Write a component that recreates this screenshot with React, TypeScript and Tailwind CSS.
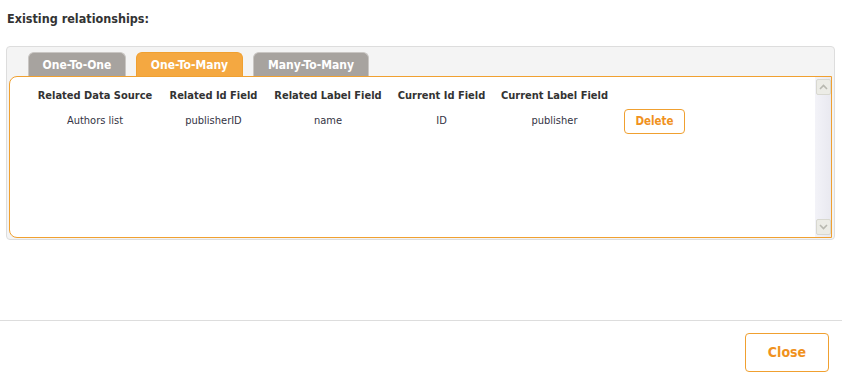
import React from 'react';

const columns = [
  { label: 'Related Data Source', width: 'w-[132px]' },
  { label: 'Related Id Field', width: 'w-[105px]' },
  { label: 'Related Label Field', width: 'w-[124px]' },
  { label: 'Current Id Field', width: 'w-[103px]' },
  { label: 'Current Label Field', width: 'w-[123px]' },
];

const rows = [['Authors list', 'publisherID', 'name', 'ID', 'publisher']];

const tabs = ['One-To-One', 'One-To-Many', 'Many-To-Many'];

export default function App() {
  return (
    <div
      className="w-[842px] h-[379px] bg-white text-[#333] flex flex-col"
      style={{ fontFamily: '"DejaVu Sans Condensed", "DejaVu Sans", sans-serif' }}
    >
      {/* Title */}
      <div className="pt-[11px] pl-[7px] text-[12.5px] font-bold leading-[15px] text-[#333]">
        Existing relationships:
      </div>

      {/* Tab container */}
      <div className="mt-[20px] ml-[6px] w-[829px] border border-[#dddddd] rounded-[4px] bg-[#f4f4f4] pt-[5px] px-[2px] pb-[1px]">
        <div className="flex gap-[10px] pl-[19px] h-[24px]">
          {tabs.map((t, i) => (
            <div
              key={t}
              className={
                'flex items-center justify-center rounded-t-[6px] text-[12px] font-bold text-white border border-b-0 ' +
                (i === 1
                  ? 'bg-[#f4a841] border-[#f0a030] w-[107px]'
                  : 'bg-[#a7a39f] border-[#c9c6c3] ' + (i === 0 ? 'w-[98px]' : 'w-[116px]'))
              }
            >
              {t}
            </div>
          ))}
        </div>

        {/* Panel */}
        <div className="h-[162px] border border-[#f0a030] rounded-l-[8px] bg-white flex">
          <div className="flex-1 pl-[19px] pt-[10px]">
            <table className="border-collapse text-[11px]">
              <thead>
                <tr>
                  {columns.map((c) => (
                    <th key={c.label} className={c.width + ' text-center font-bold h-[18px] p-0 text-[#333]'}>
                      {c.label}
                    </th>
                  ))}
                  <th className="w-[77px] p-0" />
                </tr>
              </thead>
              <tbody>
                {rows.map((r) => (
                  <tr key={r[0]}>
                    {r.map((v, i) => (
                      <td key={i} className="text-center p-0 pt-[2px] h-[31px] text-[#333344]">
                        {v}
                      </td>
                    ))}
                    <td className="p-0 pt-[2px] text-center">
                      <button className="w-[61px] h-[25px] border border-[#f0a030] rounded-[4px] text-[#f0921e] font-bold text-[11.5px] bg-white">
                        Delete
                      </button>
                    </td>
                  </tr>
                ))}
              </tbody>
            </table>
          </div>

          {/* Scrollbar */}
          <div className="w-[16px] bg-gradient-to-r from-[#f3f3f8] to-[#e9e9f0] flex flex-col justify-between py-[2px]">
            <div className="h-[16px] w-[15px] mx-auto border border-[#d8d8d0] bg-[#ececE6] rounded-[2px] flex items-center justify-center">
              <svg width="9" height="6" viewBox="0 0 9 6">
                <path d="M1 5 L4.5 1.5 L8 5" fill="none" stroke="#b8b8b0" strokeWidth="1.6" />
              </svg>
            </div>
            <div className="h-[16px] w-[15px] mx-auto border border-[#d8d8d0] bg-[#ececE6] rounded-[2px] flex items-center justify-center">
              <svg width="9" height="6" viewBox="0 0 9 6">
                <path d="M1 1 L4.5 4.5 L8 1" fill="none" stroke="#b8b8b0" strokeWidth="1.6" />
              </svg>
            </div>
          </div>
        </div>
      </div>

      {/* Footer */}
      <div className="mt-[80px] border-t border-[#dddddd] flex justify-end pt-[12px] pr-[13px]">
        <button className="w-[84px] h-[39px] border border-[#f0a030] rounded-[4px] text-[#f0921e] text-[14px] font-bold bg-white">
          Close
        </button>
      </div>
    </div>
  );
}
